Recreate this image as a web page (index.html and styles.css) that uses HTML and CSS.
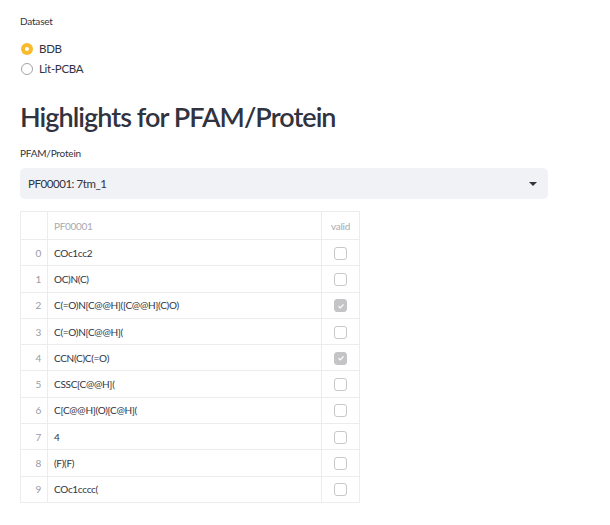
FILE: index.html
```html
<!DOCTYPE html>
<html>
<head>
<meta charset="utf-8">
<link rel="stylesheet" href="styles.css">
</head>
<body>
<main class="page">
  <div class="label">Dataset</div>
  <div class="radios">
    <div class="radio checked"><span class="dot"></span><span>BDB</span></div>
    <div class="radio"><span class="dot"></span><span>Lit-PCBA</span></div>
  </div>
  <h2 class="title">Highlights for PFAM/Protein</h2>
  <div class="label label2">PFAM/Protein</div>
  <div class="select">
    <span>PF00001: 7tm_1</span>
    <svg class="caret" width="10" height="6" viewBox="0 0 10 6"><path d="M1 1h8L5 5z" fill="#31333f"/></svg>
  </div>
  <table class="grid">
    <thead>
      <tr><th class="idx"></th><th class="smi">PF00001</th><th class="val">valid</th></tr>
    </thead>
    <tbody>
      <tr><td class="idx">0</td><td class="smi">COc1cc2</td><td class="val"><span class="cb"></span></td></tr>
      <tr><td class="idx">1</td><td class="smi">OC)N(C)</td><td class="val"><span class="cb"></span></td></tr>
      <tr><td class="idx">2</td><td class="smi">C(=O)N[C@@H]([C@@H](C)O)</td><td class="val"><span class="cb on"><svg width="8" height="8" viewBox="0 0 8 8"><path d="M1.5 4.2l1.8 1.8 3.2-3.6" fill="none" stroke="#fff" stroke-width="1.2"/></svg></span></td></tr>
      <tr><td class="idx">3</td><td class="smi">C(=O)N[C@@H](</td><td class="val"><span class="cb"></span></td></tr>
      <tr><td class="idx">4</td><td class="smi">CCN(C)C(=O)</td><td class="val"><span class="cb on"><svg width="8" height="8" viewBox="0 0 8 8"><path d="M1.5 4.2l1.8 1.8 3.2-3.6" fill="none" stroke="#fff" stroke-width="1.2"/></svg></span></td></tr>
      <tr><td class="idx">5</td><td class="smi">CSSC[C@@H](</td><td class="val"><span class="cb"></span></td></tr>
      <tr><td class="idx">6</td><td class="smi">C[C@@H](O)[C@H](</td><td class="val"><span class="cb"></span></td></tr>
      <tr><td class="idx">7</td><td class="smi">4</td><td class="val"><span class="cb"></span></td></tr>
      <tr><td class="idx">8</td><td class="smi">(F)(F)</td><td class="val"><span class="cb"></span></td></tr>
      <tr><td class="idx">9</td><td class="smi">COc1cccc(</td><td class="val"><span class="cb"></span></td></tr>
    </tbody>
  </table>
</main>
</body>
</html>
```

FILE: styles.css
```css
html, body {
  margin: 0;
  padding: 0;
  background: #fff;
}
body {
  font-family: "Lato", "Noto Sans", sans-serif;
  color: #31333f;
}
.page {
  width: 528px;
  padding: 14px 0 0 20px;
}
.label {
  font-size: 10px;
  line-height: 14px;
  height: 14px;
  letter-spacing: -0.2px;
}
.radios {
  margin-top: 13px;
  display: flex;
  flex-direction: column;
  gap: 4px;
}
.radio {
  display: flex;
  align-items: center;
  gap: 7px;
  font-size: 11.5px;
  letter-spacing: -0.3px;
  line-height: 16px;
  height: 16px;
}
.dot {
  box-sizing: border-box;
  width: 12px;
  height: 12px;
  border-radius: 50%;
  border: 1.5px solid #a3a3a8;
  background: #fff;
  position: relative;
  left: 1px;
}
.radio.checked .dot {
  border: none;
  background: #f9bb2b;
}
.radio.checked .dot::after {
  content: "";
  position: absolute;
  left: 4px;
  top: 4px;
  width: 4px;
  height: 4px;
  border-radius: 50%;
  background: #fff;
}
.title {
  margin: 22px 0 0 0;
  font-size: 27px;
  font-weight: 600;
  line-height: 36px;
  height: 36px;
  letter-spacing: -0.95px;
}
.label2 {
  margin-top: 11px;
}
.select {
  margin-top: 8px;
  height: 31px;
  box-sizing: border-box;
  background: #f0f2f6;
  border-radius: 5px;
  display: flex;
  align-items: center;
  justify-content: space-between;
  padding: 0 10px 0 8px;
  font-size: 11.5px;
  letter-spacing: -0.45px;
}
.caret {
  display: block;
}
.grid {
  margin-top: 12px;
  border-collapse: collapse;
  border: 1px solid #e4e4e6;
  width: 340px;
  font-size: 10px;
  letter-spacing: -0.3px;
}
.grid th, .grid td {
  border: 1px solid #ececee;
  padding: 0 6px;
  height: 25.3px;
  text-align: left;
  font-weight: 400;
}
.grid th {
  height: 27px;
  color: #a9a9b0;
}
.grid .idx {
  width: 14px;
  text-align: right;
  color: #9a9aa2;
  padding-right: 6px;
}
.grid th.idx { color: transparent; }
.grid .smi {
  color: #31333f;
}
.grid th.smi { color: #a9a9b0; }
.grid .val {
  width: 25px;
  text-align: center;
  padding: 0 6px;
}
.grid th.val { color: #a9a9b0; }
.cb {
  box-sizing: border-box;
  display: inline-flex;
  align-items: center;
  justify-content: center;
  width: 13px;
  height: 13px;
  border: 1px solid #c8c8cc;
  border-radius: 3px;
  vertical-align: middle;
  background: #fff;
}
.cb.on {
  background: #c4c4c6;
  border-color: #c4c4c6;
}
```
